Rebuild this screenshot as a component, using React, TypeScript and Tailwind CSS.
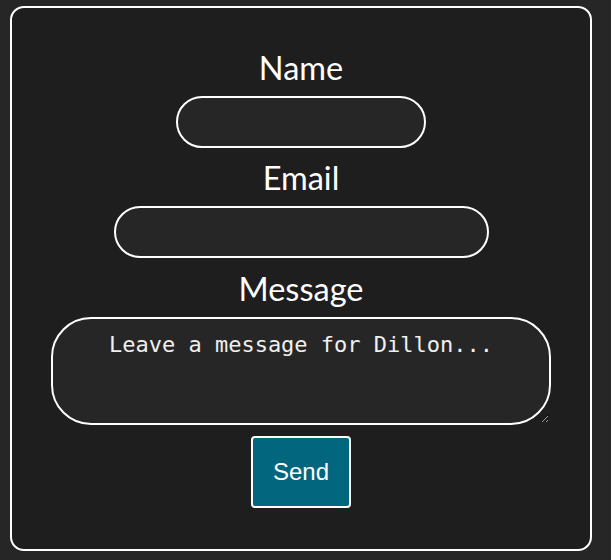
import React, { useState } from "react";

export default function App() {
  const [name, setName] = useState("");
  const [email, setEmail] = useState("");
  const [message, setMessage] = useState("");

  const inputClass =
    "h-[52px] rounded-full border-2 border-white bg-[#262626] px-5 text-white text-lg outline-none";

  return (
    <main className="min-h-screen bg-[#262626] pt-[6px] pl-[10px]">
      <form
        className="flex w-[582px] flex-col items-center rounded-[14px] border-2 border-white bg-[#1e1e1e] px-10 pt-[42px] pb-[41px]"
        style={{ fontFamily: "Lato, 'Noto Sans', sans-serif" }}
        onSubmit={(e) => e.preventDefault()}
      >
        <label className="text-[32.5px] leading-[36px] text-white">Name</label>
        <input
          className={`${inputClass} mt-[10px] w-[250px]`}
          value={name}
          onChange={(e) => setName(e.target.value)}
        />

        <label className="mt-[12px] text-[32.5px] leading-[36px] text-white">Email</label>
        <input
          type="email"
          className={`${inputClass} mt-[10px] w-[375px]`}
          value={email}
          onChange={(e) => setEmail(e.target.value)}
        />

        <label className="mt-[13px] text-[32.5px] leading-[36px] text-white">Message</label>
        <textarea
          className="mt-[10px] h-[108px] w-[500px] rounded-[40px] border-2 border-white bg-[#262626] px-8 pt-[12px] text-center text-[22px] leading-[28px] text-white outline-none placeholder:text-[#f0f0f0]"
          style={{ fontFamily: "'DejaVu Sans Mono', 'Liberation Mono', monospace" }}
          placeholder="Leave a message for Dillon..."
          value={message}
          onChange={(e) => setMessage(e.target.value)}
        />

        <button
          type="submit"
          className="mt-[11px] h-[72px] w-[100px] rounded-[4px] border-2 border-white bg-[#02667f] text-[24px] text-white"
          style={{ fontFamily: "'Liberation Sans', Arial, sans-serif" }}
        >
          Send
        </button>
      </form>
    </main>
  );
}
